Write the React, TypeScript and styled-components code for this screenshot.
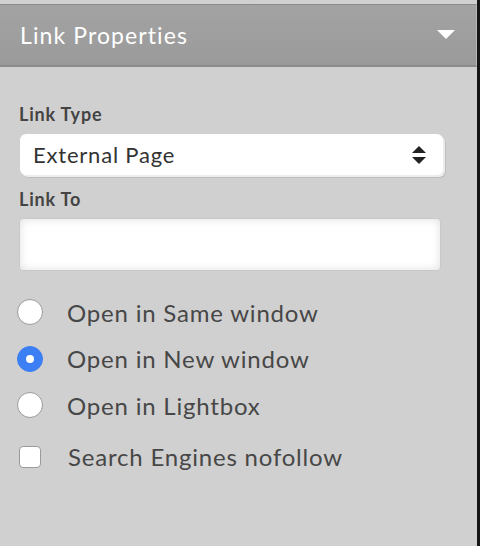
import styled, { createGlobalStyle } from 'styled-components';

const GlobalStyle = createGlobalStyle`
  html, body {
    margin: 0;
    padding: 0;
    overflow: hidden;
    background: #161616;
    font-family: Lato, "Open Sans", "Liberation Sans", sans-serif;
  }
`;

const Panel = styled.div`
  width: 477px;
  height: 100vh;
  background: #d0d0d0;
  padding-top: 4px;
  box-sizing: border-box;
  overflow: hidden;
`;

const Header = styled.div`
  height: 60px;
  display: flex;
  align-items: center;
  justify-content: space-between;
  padding: 0 21px 0 20px;
  background: linear-gradient(#a3a3a3, #9a9a9a);
  border-top: 1px solid #8a8a8a;
  border-bottom: 2px solid #8c8c8c;
  border-right: 1px solid #b8b8b8;
  box-sizing: content-box;
`;

const Title = styled.span`
  color: #fff;
  font-size: 23px;
  letter-spacing: 1.1px;
`;

const Body = styled.div`
  padding: 36px 32px 0 19px;
  display: flex;
  flex-direction: column;
`;

const Label = styled.div<{ $gap: number }>`
  font-size: 18px;
  font-weight: 700;
  color: #444;
  line-height: 22px;
  letter-spacing: 0.8px;
  margin-bottom: ${(p) => p.$gap}px;
`;

const SelectBox = styled.div`
  height: 41px;
  width: 423px;
  margin-left: 1px;
  background: #fff;
  border-radius: 6px;
  box-shadow: 2px 2px 0 #ececec, 3px 3px 0 #bfbfbf;
  display: flex;
  align-items: center;
  justify-content: space-between;
  padding: 0 17px 0 13px;
  box-sizing: border-box;
  font-size: 22px;
  letter-spacing: 0.8px;
  color: #333;
  margin-bottom: 13px;
`;

const InputBox = styled.div`
  height: 53px;
  width: 422px;
  background: #fff;
  border-radius: 4px;
  border: 1px solid #c8c8c8;
  box-sizing: border-box;
  box-shadow: inset 0 0 10px rgba(0, 0, 0, 0.12);
  margin-bottom: 18px;
`;

const Option = styled.label`
  height: 46.5px;
  display: flex;
  align-items: center;
  gap: 24px;
  font-size: 24px;
  letter-spacing: 0.8px;
  color: #474747;
`;

const Radio = styled.span<{ $checked?: boolean }>`
  width: 26px;
  height: 26px;
  border-radius: 50%;
  box-sizing: border-box;
  margin-left: -2px;
  background: ${(p) => (p.$checked ? '#3c7ef3' : '#fff')};
  border: 1px solid ${(p) => (p.$checked ? '#3c7ef3' : '#9a9a9a')};
  display: flex;
  align-items: center;
  justify-content: center;
  flex-shrink: 0;
  &::after {
    content: '';
    display: ${(p) => (p.$checked ? 'block' : 'none')};
    width: 8px;
    height: 8px;
    border-radius: 50%;
    background: #fff;
  }
`;

const Check = styled.span`
  width: 22px;
  height: 22px;
  border-radius: 4px;
  background: #fff;
  border: 1px solid #9a9a9a;
  box-sizing: border-box;
  flex-shrink: 0;
  margin-right: 3px;
`;

const CheckRow = styled(Option)`
  margin-top: 5px;
`;

export default function App() {
  return (
    <>
      <GlobalStyle />
      <Panel>
        <Header>
          <Title>Link Properties</Title>
          <svg width="18" height="10" viewBox="0 0 18 10">
            <path d="M0 0 L18 0 L9 9 Z" fill="#fff" />
          </svg>
        </Header>
        <Body>
          <Label $gap={9}>Link Type</Label>
          <SelectBox>
            <span>External Page</span>
            <svg width="14" height="22" viewBox="0 0 14 22">
              <path d="M7 2 L14 9 L0 9 Z" fill="#222" />
              <path d="M0 13 L14 13 L7 20 Z" fill="#222" />
            </svg>
          </SelectBox>
          <Label $gap={8}>Link To</Label>
          <InputBox />
          <Option>
            <Radio />
            Open in Same window
          </Option>
          <Option>
            <Radio $checked />
            Open in New window
          </Option>
          <Option>
            <Radio />
            Open in Lightbox
          </Option>
          <CheckRow>
            <Check />
            Search Engines nofollow
          </CheckRow>
        </Body>
      </Panel>
    </>
  );
}
